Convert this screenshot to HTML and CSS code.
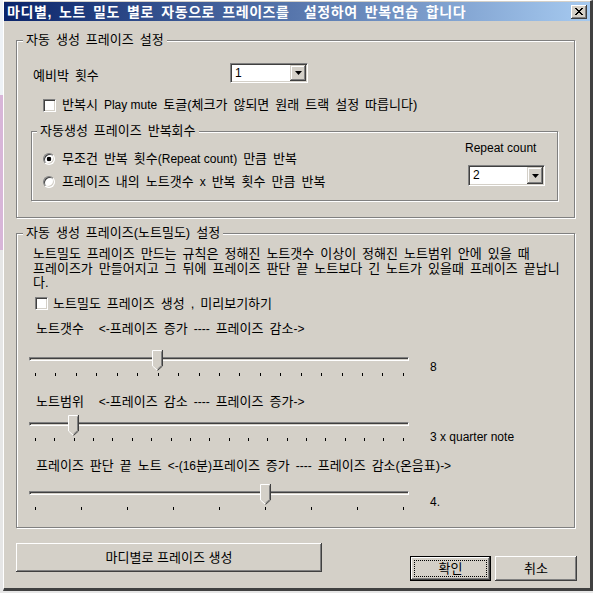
FILE: index.html
```html
<!DOCTYPE html>
<html lang="ko">
<head>
<meta charset="utf-8">
<title>마디별 프레이즈 설정</title>
<link rel="stylesheet" href="styles.css">
</head>
<body>
<div class="window">
  <div class="titlebar">
    <span class="title">마디별, 노트 밀도 별로 자동으로 프레이즈를&nbsp; 설정하여 반복연습 합니다</span>
    <span class="close"><svg width="8" height="7" viewBox="0 0 8 7" shape-rendering="crispEdges"><path fill="#000" d="M0 0h2v1H0zM6 0h2v1H6zM1 1h2v1H1zM5 1h2v1H5zM2 2h4v1H2zM3 3h2v1H3zM2 4h4v1H2zM1 5h2v1H1zM5 5h2v1H5zM0 6h2v1H0zM6 6h2v1H6z"/></svg></span>
  </div>
  <div class="client">
    <fieldset class="group group-auto">
      <legend>자동 생성 프레이즈 설정</legend>
      <div class="pre-row">
        <span class="pre-label">예비박 횟수</span>
        <div class="combo combo-pre">
          <span class="combo-value">1</span>
          <span class="combo-btn"><svg width="7" height="4" viewBox="0 0 7 4"><path d="M0 0h7L3.5 4z" fill="#000"/></svg></span>
        </div>
      </div>
      <div class="check-row check-mute">
        <span class="checkbox"></span>
        <span>반복시 <span class="en">Play mute</span> 토글(체크가 않되면 원래 트랙 설정 따릅니다)</span>
      </div>
      <fieldset class="group group-repeat">
        <legend>자동생성 프레이즈 반복회수</legend>
        <div class="radios">
          <div class="radio-row"><span class="radio checked"></span><span>무조건 반복 횟수<span class="en">(Repeat count)</span> 만큼 반복</span></div>
          <div class="radio-row"><span class="radio"></span><span>프레이즈 내의 노트갯수 <span class="en">x</span> 반복 횟수 만큼 반복</span></div>
        </div>
        <div class="repeat-count">
          <span class="en repeat-label">Repeat count</span>
          <div class="combo combo-repeat">
            <span class="combo-value">2</span>
            <span class="combo-btn"><svg width="7" height="4" viewBox="0 0 7 4"><path d="M0 0h7L3.5 4z" fill="#000"/></svg></span>
          </div>
        </div>
      </fieldset>
    </fieldset>

    <fieldset class="group group-density">
      <legend>자동 생성 프레이즈(노트밀도) 설정</legend>
      <p class="desc">노트밀도 프레이즈 만드는 규칙은 정해진 노트갯수 이상이 정해진 노트범위 안에 있을 때<br>프레이즈가 만들어지고 그 뒤에 프레이즈 판단 끝 노트보다 긴 노트가 있을때 프레이즈 끝납니<br>다.</p>
      <div class="check-row check-preview">
        <span class="checkbox"></span>
        <span>노트밀도 프레이즈 생성 , 미리보기하기</span>
      </div>

      <div class="slider s1">
        <div class="slider-label">노트갯수<span class="hint"><span class="en">&lt;-</span>프레이즈 증가 <span class="en">----</span> 프레이즈 감소<span class="en">-&gt;</span></span></div>
        <div class="slider-row">
          <div class="trackbar">
            <div class="channel"></div>
            <div class="ticks"><i></i><i></i><i></i><i></i><i></i><i></i><i></i><i></i><i></i><i></i><i></i><i></i><i></i><i></i><i></i><i></i><i></i><i></i><i></i></div>
            <span class="thumb" style="left:123px"><svg width="11" height="21" viewBox="0 0 11 21"><path d="M0 0h11v16l-5.5 5L0 16z" fill="#d4d0c8"/><path d="M0.5 16V0.5h9" fill="none" stroke="#fff"/><path d="M0.5 16l5 4.5" fill="none" stroke="#fff"/><path d="M10.5 0v16l-5 4.5" fill="none" stroke="#404040"/><path d="M9.5 1.5v14l-4 3.6" fill="none" stroke="#808080"/></svg></span>
          </div>
          <span class="slider-value en">8</span>
        </div>
      </div>

      <div class="slider s2">
        <div class="slider-label">노트범위<span class="hint"><span class="en">&lt;-</span>프레이즈 감소 <span class="en">----</span> 프레이즈 증가<span class="en">-&gt;</span></span></div>
        <div class="slider-row">
          <div class="trackbar">
            <div class="channel"></div>
            <div class="ticks"><i></i><i></i><i></i><i></i><i></i><i></i><i></i><i></i><i></i><i></i><i></i><i></i><i></i><i></i><i></i><i></i><i></i><i></i><i></i><i></i></div>
            <span class="thumb" style="left:39px"><svg width="11" height="21" viewBox="0 0 11 21"><path d="M0 0h11v16l-5.5 5L0 16z" fill="#d4d0c8"/><path d="M0.5 16V0.5h9" fill="none" stroke="#fff"/><path d="M0.5 16l5 4.5" fill="none" stroke="#fff"/><path d="M10.5 0v16l-5 4.5" fill="none" stroke="#404040"/><path d="M9.5 1.5v14l-4 3.6" fill="none" stroke="#808080"/></svg></span>
          </div>
          <span class="slider-value en">3 x quarter note</span>
        </div>
      </div>

      <div class="slider s3">
        <div class="slider-label">프레이즈 판단 끝 노트 <span class="en">&lt;-(16</span>분<span class="en">)</span>프레이즈 증가 <span class="en">----</span> 프레이즈 감소(온음표)<span class="en">-&gt;</span></div>
        <div class="slider-row">
          <div class="trackbar">
            <div class="channel"></div>
            <div class="ticks"><i></i><i></i><i></i><i></i><i></i><i></i><i></i><i></i><i></i></div>
            <span class="thumb" style="left:231px"><svg width="11" height="21" viewBox="0 0 11 21"><path d="M0 0h11v16l-5.5 5L0 16z" fill="#d4d0c8"/><path d="M0.5 16V0.5h9" fill="none" stroke="#fff"/><path d="M0.5 16l5 4.5" fill="none" stroke="#fff"/><path d="M10.5 0v16l-5 4.5" fill="none" stroke="#404040"/><path d="M9.5 1.5v14l-4 3.6" fill="none" stroke="#808080"/></svg></span>
          </div>
          <span class="slider-value en">4.</span>
        </div>
      </div>
    </fieldset>

    <div class="buttons">
      <button class="btn btn-make" type="button">마디별로 프레이즈 생성</button>
      <button class="btn btn-ok" type="button">확인</button>
      <button class="btn btn-cancel" type="button">취소</button>
    </div>
  </div>
</div>
</body>
</html>
```

FILE: styles.css
```css
* { box-sizing: border-box; }
html, body { margin: 0; }
body {
  width: 593px;
  height: 593px;
  overflow: hidden;
  background: linear-gradient(#eef2f6 0 95px, #d8b6d8 95px 250px, #e6e6e6 250px);
  font-family: "Liberation Sans", "Noto Sans CJK KR", sans-serif;
  font-size: 13px;
  line-height: 16px;
  color: #000;
  word-spacing: 2.4px;
}
.en { font-size: 12px; word-spacing: 0; }

.window {
  margin-left: 3px;
  width: 590px;
  height: 591px;
  background: #d4d0c8;
  border-style: solid;
  border-width: 1px 3px 3px 1px;
  border-color: #fff #404040 #404040 #fff;
  padding-top: 1px;
}

.titlebar {
  height: 19px;
  display: flex;
  align-items: center;
  justify-content: space-between;
  padding: 0 3px;
  background: linear-gradient(to right, #0a246a, #a6caf0);
}
.title {
  color: #fff;
  font-weight: bold;
  font-size: 14px;
  letter-spacing: 0.6px;
  word-spacing: 2.6px;
  white-space: nowrap;
}
.close {
  width: 16px;
  height: 14px;
  display: flex;
  align-items: center;
  justify-content: center;
  background: #d4d0c8;
  box-shadow: inset -1px -1px #404040, inset 1px 1px #fff, inset -2px -2px #808080;
}

.client { padding-left: 12px; }

.group {
  margin: 0;
  padding: 0;
  min-width: 0;
  border: 1px solid #808080;
  box-shadow: 1px 1px 0 #fff, inset 1px 1px 0 #fff;
}
.group > legend {
  margin-left: 6px;
  padding: 0 3px;
  line-height: 14px;
  background: #d4d0c8;
}

.group-auto {
  margin-top: 12px;
  width: 559px;
  padding: 16px 0 16px 0;
}

.pre-row { display: flex; margin-left: 16px; }
.pre-label { width: 197px; padding-top: 5px; }

.combo {
  display: flex;
  background: #fff;
  border: 1px solid;
  border-color: #808080 #fff #fff #808080;
  box-shadow: inset 1px 1px #404040, inset -1px -1px #d4d0c8;
  padding: 1px;
}
.combo-pre { width: 78px; height: 20px; }
.combo-repeat { width: 77px; height: 21px; margin: 10px 0 0 3px; }
.combo-value { flex: 1; padding-left: 3px; line-height: 16px; font-size: 12px; }
.combo-btn {
  width: 16px;
  display: flex;
  align-items: center;
  justify-content: center;
  background: #d4d0c8;
  box-shadow: inset -1px -1px #404040, inset 1px 1px #d4d0c8, inset -2px -2px #808080, inset 2px 2px #fff;
}

.check-row { display: flex; align-items: center; height: 16px; white-space: nowrap; }
.check-mute { margin: 13px 0 0 26px; gap: 6px; }
.check-preview { margin: 5px 0 0 18px; gap: 5px; }
.checkbox {
  flex: none;
  width: 13px;
  height: 13px;
  background: #fff;
  border: 1px solid;
  border-color: #808080 #fff #fff #808080;
  box-shadow: inset 1px 1px #404040, inset -1px -1px #d4d0c8;
}

.group-repeat {
  display: flex;
  margin: 11px 0 0 14px;
  width: 527px;
  padding: 0 0 10px 0;
}
.group-repeat > legend { margin-left: 5px; }
.radios { display: flex; flex-direction: column; gap: 6px; margin: 12px 0 0 11px; }
.radio-row { display: flex; align-items: center; gap: 7px; height: 17px; white-space: nowrap; }
.radio {
  flex: none;
  width: 12px;
  height: 12px;
  border-radius: 50%;
  background: #fff;
  border: 1px solid;
  border-color: #808080 #fff #fff #808080;
  box-shadow: inset 1px 1px #404040, inset -1px -1px #d4d0c8;
}
.radio.checked { background: radial-gradient(circle, #000 0 2px, #fff 2.6px); }
.repeat-count {
  margin: 3px 12px 0 auto;
  width: 80px;
  display: flex;
  flex-direction: column;
  align-items: flex-start;
}
.repeat-label { line-height: 14px; white-space: nowrap; }

.group-density {
  margin-top: 8px;
  width: 559px;
  padding: 7px 0 16px 0;
}
.desc {
  margin: 0 0 0 16px;
  line-height: 14.5px;
  white-space: nowrap;
}

.slider-label { margin-left: 19px; white-space: nowrap; }
.hint { margin-left: 15px; }
.slider-row { display: flex; align-items: flex-start; margin-left: 12px; }
.trackbar { position: relative; flex: none; width: 380px; height: 27px; }
.channel {
  margin-top: 7px;
  height: 4px;
  border: 1px solid;
  border-color: #808080 #fff #fff #808080;
  box-shadow: inset 1px 1px #404040;
}
.ticks {
  display: flex;
  justify-content: space-between;
  margin: 12px 5px 0 6px;
  height: 3px;
}
.ticks i { width: 1px; background: #000; }
.thumb { position: absolute; top: 0; width: 11px; height: 21px; }
.thumb svg { display: block; }
.slider-value { margin-left: 21px; white-space: nowrap; }

.s1 .slider-label { margin-top: 9.5px; }
.s1 .slider-row { margin-top: 13px; }
.s1 .slider-value { margin-top: 9px; }
.s2 .slider-label { margin-top: 17px; }
.s2 .slider-row { margin-top: 5px; }
.s2 .slider-value { margin-top: 14px; }
.s3 .slider-label { margin-top: 13px; }
.s3 .slider-row { margin-top: 10px; }
.s3 .slider-value { margin-top: 10px; }

.buttons { display: flex; align-items: flex-start; margin-top: 15px; }
.btn {
  font: inherit;
  color: #000;
  background: #d4d0c8;
  border: 0;
  padding: 0;
  box-shadow: inset -1px -1px #404040, inset 1px 1px #fff, inset -2px -2px #808080, inset 2px 2px #d4d0c8;
}
.btn-make { width: 306px; height: 29px; }
.btn-ok {
  position: relative;
  width: 81px;
  height: 25px;
  margin: 13px 0 0 88px;
  border: 1px solid #000;
}
.btn-ok::after {
  content: "";
  position: absolute;
  inset: 3px;
  border: 1px dotted #000;
}
.btn-cancel { width: 82px; height: 25px; margin: 13px 0 0 4px; }
```
